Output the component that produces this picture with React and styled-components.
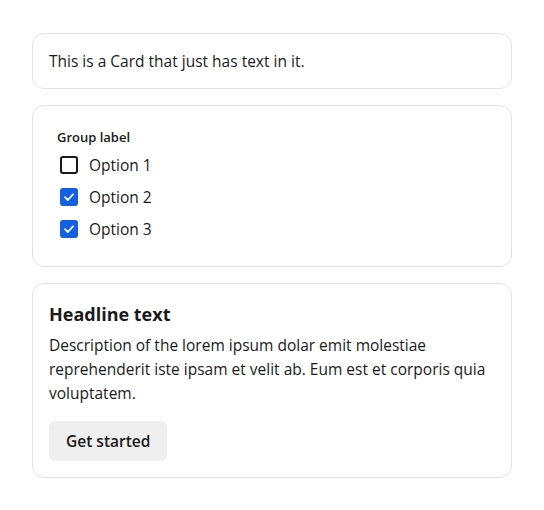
import React from 'react'
import styled, { createGlobalStyle } from 'styled-components'

const GlobalStyle = createGlobalStyle`
  body {
    margin: 0;
    background: #ffffff;
    font-family: "Open Sans", "Noto Sans", sans-serif;
    color: #1a1a1a;
  }
`

function App() {
    const options = [
        { label: 'Option 1', checked: false },
        { label: 'Option 2', checked: true },
        { label: 'Option 3', checked: true },
    ]

    return (
        <Page>
            <GlobalStyle />
            <Card>
                <PlainText>This is a Card that just has text in it.</PlainText>
            </Card>
            <Card>
                <Group>
                    <GroupLabel>Group label</GroupLabel>
                    {options.map(option => (
                        <OptionRow key={option.label}>
                            <Box checked={option.checked}>
                                {option.checked ? (
                                    <svg width="12" height="12" viewBox="0 0 12 12">
                                        <path d="M2 6.2 L4.8 9 L10 3.4" fill="none" stroke="#fff" strokeWidth="1.8" strokeLinecap="round" strokeLinejoin="round" />
                                    </svg>
                                ) : null}
                            </Box>
                            <OptionLabel>{option.label}</OptionLabel>
                        </OptionRow>
                    ))}
                </Group>
            </Card>
            <Card>
                <Headline>Headline text</Headline>
                <Description>
                    Description of the lorem ipsum dolar emit molestiae reprehenderit iste ipsam et velit ab. Eum est et corporis quia voluptatem.
                </Description>
                <Button>Get started</Button>
            </Card>
        </Page>
    )
}
export default App

const Page = styled.div`
display: flex;
flex-direction: column;
gap: 16px;
padding: 33px 32px;
width: 480px;
`
const Card = styled.div`
border: 1px solid #e2e2e2;
border-radius: 12px;
padding: 16px;
background: #fff;
`
const PlainText = styled.p`
margin: 0;
font-size: 15.5px;
line-height: 22px;
`
const Group = styled.div`
display: flex;
flex-direction: column;
padding: 5px 8px 5px 8px;
`
const GroupLabel = styled.div`
font-size: 13px;
font-weight: 600;
line-height: 20px;
margin-bottom: 2px;
`
const OptionRow = styled.label`
display: flex;
align-items: center;
gap: 11px;
height: 32px;
padding-left: 3px;
`
const Box = styled.span`
box-sizing: border-box;
width: 18px;
height: 18px;
border-radius: 3px;
border: 2px solid ${p => (p.checked ? '#1360e0' : '#1a1a1a')};
background: ${p => (p.checked ? '#1360e0' : '#fff')};
display: flex;
align-items: center;
justify-content: center;
`
const OptionLabel = styled.span`
font-size: 15.5px;
line-height: 22px;
`
const Headline = styled.h3`
margin: 2px 0 7px 0;
font-size: 18px;
font-weight: 700;
line-height: 24px;
`
const Description = styled.p`
margin: 0 0 16px 0;
font-size: 15.5px;
line-height: 24px;
`
const Button = styled.button`
border: none;
background: #efefef;
border-radius: 6px;
height: 40px;
padding: 0 17px;
font-family: inherit;
font-size: 15.5px;
font-weight: 600;
color: #1a1a1a;
`
